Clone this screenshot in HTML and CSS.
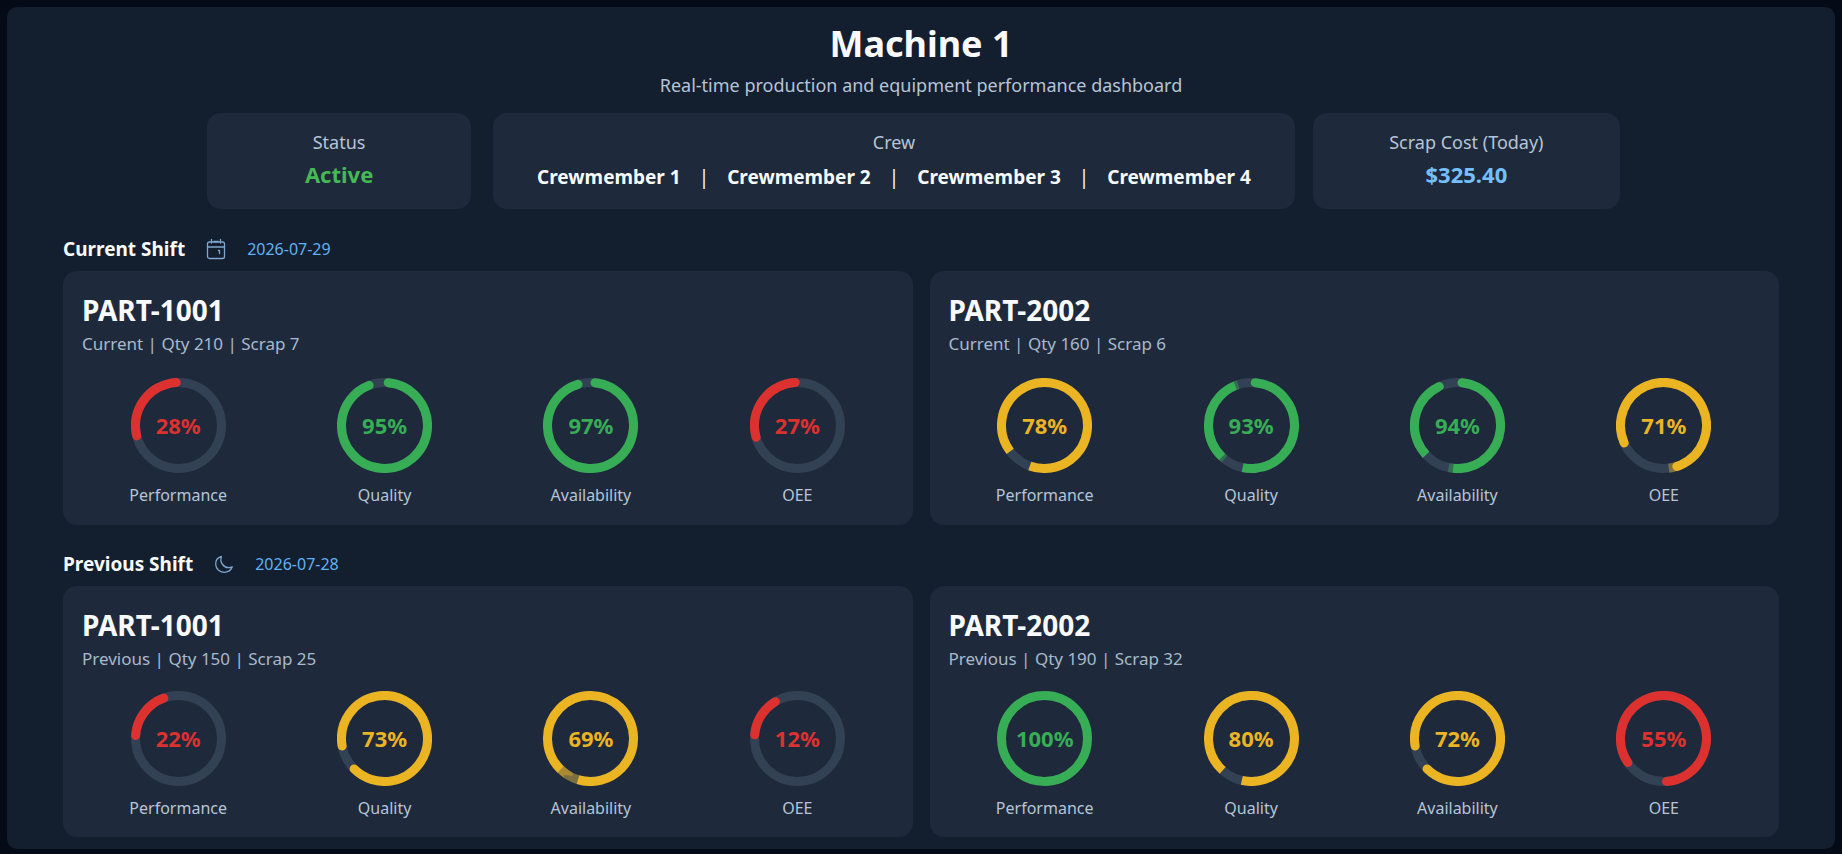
FILE: index.html
```
<!DOCTYPE html>
<html lang="en">
<head>
    <meta charset="UTF-8">
    <meta name="viewport" content="width=device-width, initial-scale=1.0">
    <title>Machine 1</title>
    <link rel="stylesheet" href="styles.css">
</head>
<body>
    <main class="dashboard">
        <header class="header">
            <h1>Machine 1</h1>
            <p>Real-time production and equipment performance dashboard</p>
        </header>

        <div class="info">
            <div class="info-card status">
                <div class="info-label">Status</div>
                <div class="info-value active">Active</div>
            </div>
            <div class="info-card">
                <div class="info-label">Crew</div>
                <div class="crew">
                    <span>Crewmember 1</span>
                    <span class="divider">|</span>
                    <span>Crewmember 2</span>
                    <span class="divider">|</span>
                    <span>Crewmember 3</span>
                    <span class="divider">|</span>
                    <span>Crewmember 4</span>
                </div>
            </div>
            <div class="info-card">
                <div class="info-label">Scrap Cost (Today)</div>
                <div class="info-value cost">$325.40</div>
            </div>
        </div>

        <section class="shift">
            <div class="shift-header">
                <h2>Current Shift</h2>
                <svg class="icon" viewBox="0 0 20 22">
                    <rect x="1.5" y="4" width="17" height="16.5" rx="2"/>
                    <path d="M1.500 9h17M5.500 1.500V5M14.500 1.500V5M8 3.500h4M12.500 12.500h1v3"/>
                </svg>
                <span class="date">2026-07-29</span>
            </div>
            <div class="parts">
                <div class="part">
                    <h3>PART-1001</h3>
                    <p>Current | Qty 210 | Scrap 7</p>
                    <div class="gauges">
                        <div class="gauge red">
                            <div class="ring">
                                <svg viewBox="0 0 95 95">
                                    <circle class="track" cx="47.5" cy="47.5" r="43"/>
                                    <circle class="arc" cx="47.5" cy="47.5" r="43" pathLength="360" stroke-dasharray="101 259" transform="rotate(166 47.5 47.5)"/>
                                </svg>
                                <span>28%</span>
                            </div>
                            <div class="gauge-label">Performance</div>
                        </div>
                        <div class="gauge green">
                            <div class="ring">
                                <svg viewBox="0 0 95 95">
                                    <circle class="track" cx="47.5" cy="47.5" r="43"/>
                                    <circle class="arc" cx="47.5" cy="47.5" r="43" pathLength="360" stroke-dasharray="334 26" transform="rotate(-85 47.5 47.5)"/>
                                </svg>
                                <span>95%</span>
                            </div>
                            <div class="gauge-label">Quality</div>
                        </div>
                        <div class="gauge green">
                            <div class="ring">
                                <svg viewBox="0 0 95 95">
                                    <circle class="track" cx="47.5" cy="47.5" r="43"/>
                                    <circle class="arc" cx="47.5" cy="47.5" r="43" pathLength="360" stroke-dasharray="337 23" transform="rotate(-84 47.5 47.5)"/>
                                </svg>
                                <span>97%</span>
                            </div>
                            <div class="gauge-label">Availability</div>
                        </div>
                        <div class="gauge red">
                            <div class="ring">
                                <svg viewBox="0 0 95 95">
                                    <circle class="track" cx="47.5" cy="47.5" r="43"/>
                                    <circle class="arc" cx="47.5" cy="47.5" r="43" pathLength="360" stroke-dasharray="103 257" transform="rotate(164 47.5 47.5)"/>
                                </svg>
                                <span>27%</span>
                            </div>
                            <div class="gauge-label">OEE</div>
                        </div>
                    </div>
                </div>
                <div class="part">
                    <h3>PART-2002</h3>
                    <p>Current | Qty 160 | Scrap 6</p>
                    <div class="gauges">
                        <div class="gauge yellow">
                            <div class="ring">
                                <svg viewBox="0 0 95 95">
                                    <circle class="track" cx="47.5" cy="47.5" r="43"/>
                                    <circle class="arc flat" cx="47.5" cy="47.5" r="43" pathLength="360" stroke-dasharray="327 33" transform="rotate(143 47.5 47.5)"/>
                                </svg>
                                <span>78%</span>
                            </div>
                            <div class="gauge-label">Performance</div>
                        </div>
                        <div class="gauge green">
                            <div class="ring">
                                <svg viewBox="0 0 95 95">
                                    <circle class="track" cx="47.5" cy="47.5" r="43"/>
                                    <circle class="arc" cx="47.5" cy="47.5" r="43" pathLength="360" stroke-dasharray="170 190" transform="rotate(-85 47.5 47.5)"/>
                                    <circle class="arc flat" cx="47.5" cy="47.5" r="43" pathLength="360" stroke-dasharray="18 342" transform="rotate(84 47.5 47.5)"/>
                                    <circle class="arc flat" cx="47.5" cy="47.5" r="43" pathLength="360" stroke-dasharray="115 245" transform="rotate(133 47.5 47.5)"/>
                                    <circle class="arc flat fade" cx="47.5" cy="47.5" r="43" pathLength="360" stroke-dasharray="4 115 4 237" transform="rotate(129 47.5 47.5)"/>
                                </svg>
                                <span>93%</span>
                            </div>
                            <div class="gauge-label">Quality</div>
                        </div>
                        <div class="gauge green">
                            <div class="ring">
                                <svg viewBox="0 0 95 95">
                                    <circle class="track" cx="47.5" cy="47.5" r="43"/>
                                    <circle class="arc" cx="47.5" cy="47.5" r="43" pathLength="360" stroke-dasharray="170 190" transform="rotate(-84 47.5 47.5)"/>
                                    <circle class="arc" cx="47.5" cy="47.5" r="43" pathLength="360" stroke-dasharray="92 268" transform="rotate(153 47.5 47.5)"/>
                                    <circle class="arc flat" cx="47.5" cy="47.5" r="43" pathLength="360" stroke-dasharray="20 340" transform="rotate(137 47.5 47.5)"/>
                                    <circle class="arc flat" cx="47.5" cy="47.5" r="43" pathLength="360" stroke-dasharray="12 348" transform="rotate(84 47.5 47.5)"/>
                                    <circle class="arc flat fade" cx="47.5" cy="47.5" r="43" pathLength="360" stroke-dasharray="6 354" transform="rotate(96 47.5 47.5)"/>
                                </svg>
                                <span>94%</span>
                            </div>
                            <div class="gauge-label">Availability</div>
                        </div>
                        <div class="gauge yellow">
                            <div class="ring">
                                <svg viewBox="0 0 95 95">
                                    <circle class="track" cx="47.5" cy="47.5" r="43"/>
                                    <circle class="arc flat fade" cx="47.5" cy="47.5" r="43" pathLength="360" stroke-dasharray="8 352" transform="rotate(75 47.5 47.5)"/>
                                    <circle class="arc" cx="47.5" cy="47.5" r="43" pathLength="360" stroke-dasharray="276 84" transform="rotate(156 47.5 47.5)"/>
                                </svg>
                                <span>71%</span>
                            </div>
                            <div class="gauge-label">OEE</div>
                        </div>
                    </div>
                </div>
            </div>
        </section>

        <section class="shift previous">
            <div class="shift-header">
                <h2>Previous Shift</h2>
                <svg class="icon" viewBox="0 0 20 22">
                    <path d="M7.500 3.500C3.500 4.500 1.500 8 1.700 11.500C2 16 5.500 19.300 10 19.300C13.800 19.300 17 17.300 18.300 13.800C14.500 15.300 10.600 14.300 8.600 11.500C6.800 9 6.400 6 7.500 3.500Z"/>
                </svg>
                <span class="date">2026-07-28</span>
            </div>
            <div class="parts">
                <div class="part">
                    <h3>PART-1001</h3>
                    <p>Previous | Qty 150 | Scrap 25</p>
                    <div class="gauges">
                        <div class="gauge red">
                            <div class="ring">
                                <svg viewBox="0 0 95 95">
                                    <circle class="track" cx="47.5" cy="47.5" r="43"/>
                                    <circle class="arc" cx="47.5" cy="47.5" r="43" pathLength="360" stroke-dasharray="66 294" transform="rotate(184 47.5 47.5)"/>
                                </svg>
                                <span>22%</span>
                            </div>
                            <div class="gauge-label">Performance</div>
                        </div>
                        <div class="gauge yellow">
                            <div class="ring">
                                <svg viewBox="0 0 95 95">
                                    <circle class="track" cx="47.5" cy="47.5" r="43"/>
                                    <circle class="arc" cx="47.5" cy="47.5" r="43" pathLength="360" stroke-dasharray="325 35" transform="rotate(170 47.5 47.5)"/>
                                </svg>
                                <span>73%</span>
                            </div>
                            <div class="gauge-label">Quality</div>
                        </div>
                        <div class="gauge yellow">
                            <div class="ring">
                                <svg viewBox="0 0 95 95">
                                    <circle class="track" cx="47.5" cy="47.5" r="43"/>
                                    <circle class="arc flat" cx="47.5" cy="47.5" r="43" pathLength="360" stroke-dasharray="333 27" transform="rotate(134 47.5 47.5)"/>
                                    <circle class="arc flat fade" cx="47.5" cy="47.5" r="43" pathLength="360" stroke-dasharray="28 332" transform="rotate(107 47.5 47.5)"/>
                                    <circle class="arc flat fade" cx="47.5" cy="47.5" r="43" pathLength="360" stroke-dasharray="14 346" transform="rotate(121 47.5 47.5)"/>
                                </svg>
                                <span>69%</span>
                            </div>
                            <div class="gauge-label">Availability</div>
                        </div>
                        <div class="gauge red">
                            <div class="ring">
                                <svg viewBox="0 0 95 95">
                                    <circle class="track" cx="47.5" cy="47.5" r="43"/>
                                    <circle class="arc" cx="47.5" cy="47.5" r="43" pathLength="360" stroke-dasharray="54 306" transform="rotate(185 47.5 47.5)"/>
                                </svg>
                                <span>12%</span>
                            </div>
                            <div class="gauge-label">OEE</div>
                        </div>
                    </div>
                </div>
                <div class="part">
                    <h3>PART-2002</h3>
                    <p>Previous | Qty 190 | Scrap 32</p>
                    <div class="gauges">
                        <div class="gauge green">
                            <div class="ring">
                                <svg viewBox="0 0 95 95">
                                    <circle class="arc" cx="47.5" cy="47.5" r="43"/>
                                </svg>
                                <span>100%</span>
                            </div>
                            <div class="gauge-label">Performance</div>
                        </div>
                        <div class="gauge yellow">
                            <div class="ring">
                                <svg viewBox="0 0 95 95">
                                    <circle class="track" cx="47.5" cy="47.5" r="43"/>
                                    <circle class="arc flat" cx="47.5" cy="47.5" r="43" pathLength="360" stroke-dasharray="331 29" transform="rotate(132 47.5 47.5)"/>
                                </svg>
                                <span>80%</span>
                            </div>
                            <div class="gauge-label">Quality</div>
                        </div>
                        <div class="gauge yellow">
                            <div class="ring">
                                <svg viewBox="0 0 95 95">
                                    <circle class="track" cx="47.5" cy="47.5" r="43"/>
                                    <circle class="arc" cx="47.5" cy="47.5" r="43" pathLength="360" stroke-dasharray="325 35" transform="rotate(170 47.5 47.5)"/>
                                </svg>
                                <span>72%</span>
                            </div>
                            <div class="gauge-label">Availability</div>
                        </div>
                        <div class="gauge red">
                            <div class="ring">
                                <svg viewBox="0 0 95 95">
                                    <circle class="track" cx="47.5" cy="47.5" r="43"/>
                                    <circle class="arc" cx="47.5" cy="47.5" r="43" pathLength="360" stroke-dasharray="300 60" transform="rotate(146 47.5 47.5)"/>
                                </svg>
                                <span>55%</span>
                            </div>
                            <div class="gauge-label">OEE</div>
                        </div>
                    </div>
                </div>
            </div>
        </section>
    </main>
</body>
</html>
```
FILE: styles.css
```
* {
    box-sizing: border-box;
}
body {
    font-family: "Segoe UI", "Noto Sans", "Open Sans", sans-serif;
    margin: 0;
    padding: 7px 7px 5px;
    background-color: #040a16;
    color: #b6c4d6;
}
h1, h2, h3, p {
    margin: 0;
    color: #f8fafc;
}
.dashboard {
    padding: 15px 56px 12px;
    border-radius: 10px;
    background-color: #131e2e;
}
.header {
    text-align: center;
}
.header h1 {
    font-size: 36px;
    line-height: 44px;
}
.header p {
    margin-top: 5px;
    font-size: 18px;
    line-height: 28px;
    color: #b6c4d6;
}
.info {
    display: grid;
    grid-template-columns: 268fr 801fr 307fr;
    gap: 18px;
    margin-top: 14px;
    padding: 0 159px 0 144px;
}
.info-card {
    padding: 17px 16px 15px;
    border-radius: 14px;
    background-color: #1e2a3b;
    text-align: center;
}
.status {
    margin-right: 4px;
}
.info-label {
    margin-bottom: 6px;
    font-size: 18px;
    line-height: 24px;
}
.info-value {
    font-size: 22px;
    font-weight: bold;
    line-height: 28px;
}
.active {
    color: #46b854;
}
.cost {
    color: #73c0fd;
}
.crew {
    display: flex;
    justify-content: center;
    gap: 18px;
    font-size: 19px;
    font-weight: bold;
    line-height: 34px;
    color: #f8fafc;
}
.divider {
    font-weight: normal;
}
.shift {
    margin-top: 26px;
}
.shift-header {
    display: flex;
    align-items: center;
    margin-bottom: 8px;
}
.shift-header h2 {
    font-size: 19px;
    line-height: 28px;
}
.icon {
    width: 20px;
    height: 22px;
    margin: 0 21px;
    fill: none;
    stroke: #7fa6cf;
    stroke-width: 1.3;
    stroke-linecap: round;
    stroke-linejoin: round;
}
.date {
    font-size: 16px;
    color: #5fb2f5;
}
.parts {
    display: grid;
    grid-template-columns: 1fr 1fr;
    gap: 17px;
}
.part {
    padding: 21px 19px 18px;
    border-radius: 14px;
    background-color: #1e2a3b;
}
.part h3 {
    font-size: 28px;
    line-height: 36px;
}
.part p {
    margin-top: 4px;
    font-size: 17px;
    line-height: 24px;
    color: #a9b9cc;
}
.gauges {
    display: grid;
    grid-template-columns: repeat(4, 1fr);
    gap: 14px;
    margin-top: 22px;
}
.gauge {
    text-align: center;
}
.ring {
    display: grid;
    place-items: center;
    width: 95px;
    height: 95px;
    margin: 0 auto 10px;
}
/* the value sits in the same cell as the ring */
.ring svg, .ring span {
    grid-area: 1 / 1;
}
.ring span {
    padding-bottom: 2px;
    font-size: 22px;
    font-weight: bold;
}
.ring circle {
    fill: none;
    stroke-width: 9;
}
.ring .track {
    stroke: #334154;
}
.ring .arc {
    stroke: currentColor;
    stroke-linecap: round;
}
.ring .flat {
    stroke-linecap: butt;
}
.ring .fade {
    opacity: 0.4;
}
.red .ring {
    color: #dc312f;
}
.green .ring {
    color: #37ad55;
}
.yellow .ring {
    color: #ebb423;
}
.gauge-label {
    font-size: 16px;
    line-height: 24px;
}
.previous {
    margin-top: 25px;
}
.previous .gauges {
    margin-top: 20px;
}
.previous .part {
    padding-bottom: 17px;
}
```
